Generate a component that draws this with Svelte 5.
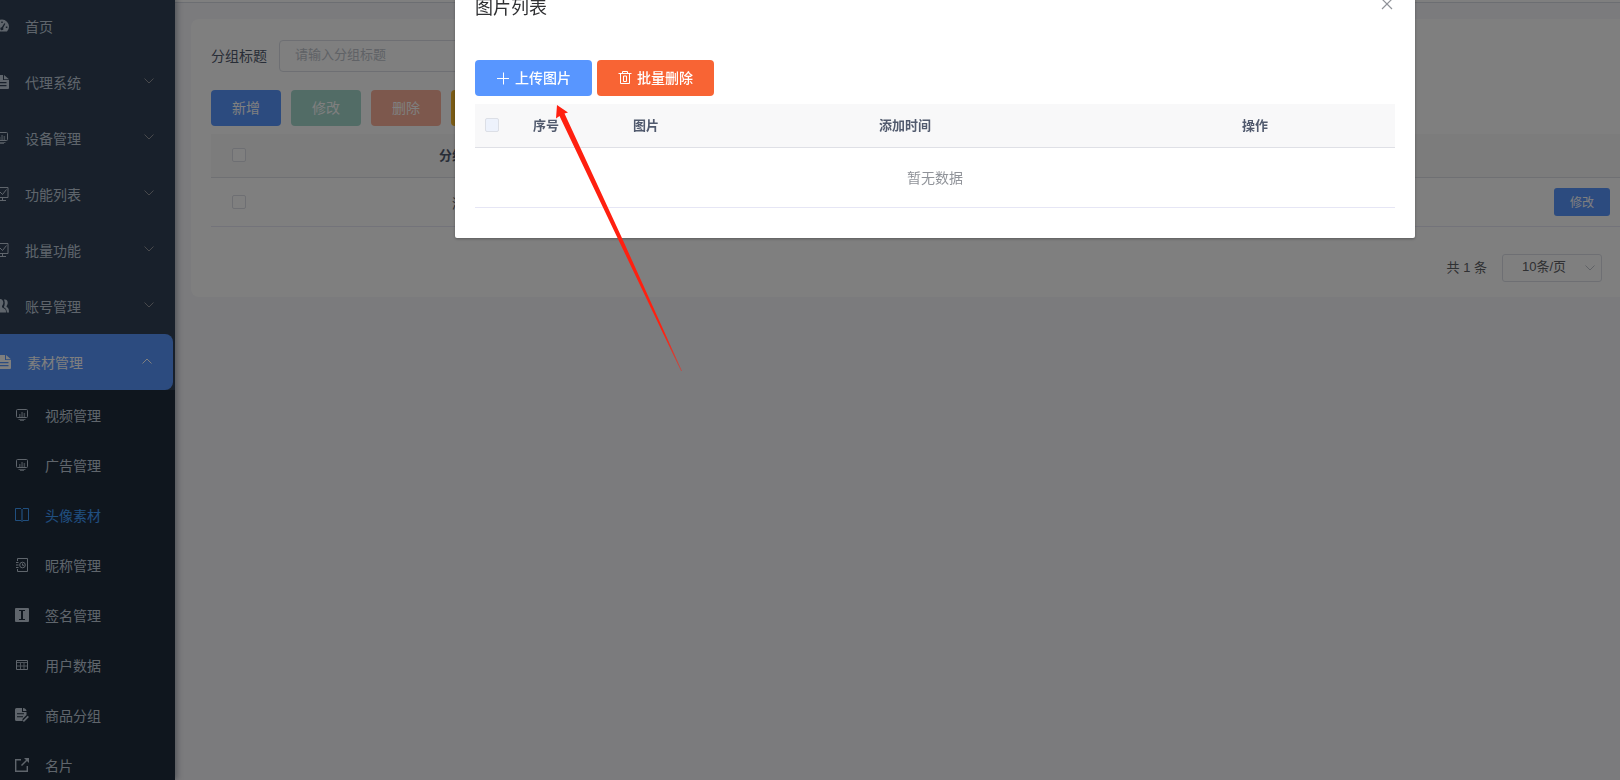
<script lang="ts">
	interface MenuItem {
		label: string;
		icon: string;
		active?: boolean;
		leaf?: boolean;
	}

	const menu: MenuItem[] = [
		{ label: '首页', icon: 'dashboard', leaf: true },
		{ label: '代理系统', icon: 'document' },
		{ label: '设备管理', icon: 'monitor' },
		{ label: '功能列表', icon: 'board' },
		{ label: '批量功能', icon: 'board' },
		{ label: '账号管理', icon: 'users' },
		{ label: '素材管理', icon: 'document', active: true }
	];

	const submenu: MenuItem[] = [
		{ label: '视频管理', icon: 'monitor' },
		{ label: '广告管理', icon: 'monitor' },
		{ label: '头像素材', icon: 'book', active: true },
		{ label: '昵称管理', icon: 'contacts' },
		{ label: '签名管理', icon: 'sign' },
		{ label: '用户数据', icon: 'table' },
		{ label: '商品分组', icon: 'edit' },
		{ label: '名片', icon: 'external' }
	];

	let title = $state('');
	let pageSize = $state('10');
	let dialogOpen = $state(true);
</script>

{#snippet icon(name: string)}
	<svg class="icon" viewBox="0 0 14 14" width="14" height="14" aria-hidden="true">
		{#if name === 'dashboard'}
			<path
				fill="currentColor"
				fill-rule="evenodd"
				d="M2 12.500A7 7 0 1 1 12 12.500zM6.300 2.500v1.600h1.400V2.500zM2.800 4.500l1.100 1.100 1-1-1.100-1.100zM1.600 7.600v1.400h1.600V7.600zM10.800 7.600v1.400h1.600V7.600zM9.300 4.200L6.800 8.200a1.500 1.500 0 1 0 1.300.700l2.300-4.200z"
			/>
		{:else if name === 'document'}
			<path
				fill="currentColor"
				fill-rule="evenodd"
				d="M1.500 0H8v5h6v8a1 1 0 0 1-1 1H1.500a1 1 0 0 1-1-1V1a1 1 0 0 1 1-1zM3 7v1.300h8.500V7zM3 10v1.300h8.500V10z"
			/>
			<path fill="currentColor" d="M9 0l5 4.200H9z" />
		{:else if name === 'monitor'}
			<rect x="1.500" y="1.500" width="11" height="8" rx="1" fill="none" stroke="currentColor" />
			<path fill="currentColor" opacity=".6" d="M4 6h1.500v3H4zM6.300 4h1.500v5H6.300zM8.600 5h1.500v4H8.600z" />
			<path stroke="currentColor" opacity=".7" d="M3.500 11.500h7M5 12.500h4" />
		{:else if name === 'board'}
			<path fill="none" stroke="currentColor" d="M0 .5h13v10H0M5 5l2.500 2.500 4-5M7.500 10.500v3M4 13.500h7" />
		{:else if name === 'users'}
			<path
				fill="currentColor"
				d="M5 0c2 0 3.300 1.600 3.300 3.600 0 1.400-.600 2.600-1.300 3.300v1.300l3.200 2c.500.500.800 1.400.800 3.300H0V9.500l3-1.300V6.900C2.300 6 1.700 5 1.700 3.600 1.700 1.600 3 0 5 0z"
			/>
			<path
				fill="currentColor"
				d="M9 .5c2.500-.5 3.800 1.200 3.700 3.300 0 1.400-.5 2.200-1.100 3.100v1.200c1.800 1 2.400 1.800 2.400 5.400h-2.200c0-2.500-.5-3.800-3-5.300C9.900 6.500 10.200 2.800 9 .5z"
			/>
		{:else if name === 'book'}
			<path fill="none" stroke="currentColor" d="M6 .5H.5v12H6M8 .5h5.500v12H8" />
			<path stroke="currentColor" stroke-width="2" opacity=".6" d="M7 1v13" />
		{:else if name === 'contacts'}
			<path fill="none" stroke="currentColor" d="M2.500 3V.5h10v13h-10V11" />
			<path stroke="currentColor" d="M1 4.500h2.500M1 7h2.500M1 9.500h2.500" />
			<circle cx="7.500" cy="7" r="2.800" fill="none" stroke="currentColor" />
			<path stroke="currentColor" d="M7.500 5.500v1.800h1.500" fill="none" />
		{:else if name === 'sign'}
			<path
				fill="currentColor"
				fill-rule="evenodd"
				d="M1 0h12a1 1 0 0 1 1 1v12a1 1 0 0 1-1 1H1a1 1 0 0 1-1-1V1a1 1 0 0 1 1-1zM4 2v1h2v8H4v1h6v-1H8V3h2V2z"
			/>
		{:else if name === 'table'}
			<path fill="none" stroke="currentColor" d="M1.500 2.500h11v9h-11z" />
			<path stroke="currentColor" opacity=".8" d="M2 4.500h10M2 8h10M5.500 5v6M9 5v6" />
		{:else if name === 'edit'}
			<path
				fill="currentColor"
				fill-rule="evenodd"
				d="M1.500 0H7v4h4.500v3L7.500 11v2H1.500A1.500 1.500 0 0 1 0 11.500v-10A1.500 1.500 0 0 1 1.500 0zM2 5.200v1h7v-1zM2 8.200v1h6v-1z"
			/>
			<path fill="currentColor" d="M8 0c2 0 3.500 1.500 3.500 3H8z" />
			<path stroke="currentColor" stroke-width="1.800" d="M8.300 13.300l5-5" />
		{:else if name === 'external'}
			<path fill="none" stroke="currentColor" stroke-width="1.400" d="M6 1.700H.7v11.600h11.600V8" />
			<path stroke="currentColor" stroke-width="1.400" d="M6.500 7.500l6-6" />
			<path fill="currentColor" d="M9 0h5v5z" />
		{:else if name === 'plus'}
			<path stroke="currentColor" d="M1 7.500h12M7.500 1.500v12" />
		{:else if name === 'trash'}
			<path
				fill="none"
				stroke="currentColor"
				d="M.5 2.500h13M4.500 2.500v-2h5v2M2.500 2.500v10h9v-10M5.500 5v5.500M8.500 5v5.500M5.500 10.500h3M5.500 5h3"
			/>
		{:else if name === 'close'}
			<path fill="none" stroke="currentColor" stroke-width="1.200" d="M2 2l10 10M12 2L2 12" />
		{:else if name === 'down'}
			<path fill="none" stroke="currentColor" d="M2.500 4.500L7 9l4.500-4.500" />
		{:else if name === 'up'}
			<path fill="none" stroke="currentColor" d="M2.500 9.500L7 5l4.500 4.500" />
		{/if}
	</svg>
{/snippet}

<div class="app">
	<nav class="sidebar">
		{#each menu as item}
			<a href="#menu" class="menu-item" class:active={item.active}>
				{@render icon(item.icon)}
				<span>{item.label}</span>
				{#if !item.leaf}
					<span class="caret">{@render icon(item.active ? 'up' : 'down')}</span>
				{/if}
			</a>
		{/each}
		<div class="submenu">
			{#each submenu as item}
				<a href="#submenu" class="sub-item" class:current={item.active}>
					{@render icon(item.icon)}
					<span>{item.label}</span>
				</a>
			{/each}
		</div>
	</nav>

	<main class="main">
		<div class="topbar"></div>
		<section class="card">
			<div class="search">
				<label for="group-title">分组标题</label>
				<input id="group-title" type="text" placeholder="请输入分组标题" bind:value={title} />
			</div>

			<div class="toolbar">
				<button type="button" class="btn primary">新增</button>
				<button type="button" class="btn success" disabled>修改</button>
				<button type="button" class="btn danger" disabled>删除</button>
				<button type="button" class="btn warning">导出</button>
			</div>

			<table class="groups">
				<colgroup>
					<col class="col-check" />
					<col class="col-title" />
					<col />
					<col class="col-action" />
				</colgroup>
				<thead>
					<tr>
						<th><input type="checkbox" aria-label="全选" /></th>
						<th>分组标题</th>
						<th></th>
						<th></th>
					</tr>
				</thead>
				<tbody>
					<tr>
						<td><input type="checkbox" aria-label="选择" /></td>
						<td>测试</td>
						<td></td>
						<td><button type="button" class="btn primary small">修改</button></td>
					</tr>
				</tbody>
			</table>

			<div class="pagination">
				<span class="total">共 1 条</span>
				<div class="page-size">
					<select bind:value={pageSize} aria-label="每页条数">
						<option value="10">10条/页</option>
						<option value="20">20条/页</option>
						<option value="50">50条/页</option>
					</select>
					{@render icon('down')}
				</div>
			</div>
		</section>
	</main>
</div>

{#if dialogOpen}
	<div class="overlay">
		<div class="dialog" role="dialog" aria-modal="true" aria-labelledby="dialog-title">
			<header>
				<h2 id="dialog-title">图片列表</h2>
				<button type="button" class="close" aria-label="关闭" onclick={() => (dialogOpen = false)}>
					{@render icon('close')}
				</button>
			</header>
			<div class="body">
				<div class="actions">
					<button type="button" class="btn primary">{@render icon('plus')}<span>上传图片</span></button>
					<button type="button" class="btn danger">{@render icon('trash')}<span>批量删除</span></button>
				</div>
				<table class="images">
					<colgroup>
						<col class="col-select" />
						<col class="col-index" />
						<col class="col-image" />
						<col />
						<col class="col-ops" />
					</colgroup>
					<thead>
						<tr>
							<th><input type="checkbox" aria-label="全选图片" disabled /></th>
							<th>序号</th>
							<th>图片</th>
							<th>添加时间</th>
							<th>操作</th>
						</tr>
					</thead>
					<tbody>
						<tr>
							<td class="empty" colspan="5">暂无数据</td>
						</tr>
					</tbody>
				</table>
			</div>
		</div>
	</div>
{/if}

<svg class="pointer" viewBox="0 0 128 268" width="128" height="268" aria-hidden="true">
	<defs>
		<linearGradient id="pointer-fade" x1="0" y1="0" x2="0" y2="1">
			<stop offset="0.85" stop-color="#ff2010" />
			<stop offset="1" stop-color="#ff2010" stop-opacity="0.5" />
		</linearGradient>
	</defs>
	<path
		fill="url(#pointer-fade)"
		d="M2 0L13 7.500L9.500 8.500L66.500 132L127 266L126 266L63 134L4.500 11L1 13.500z"
	/>
</svg>

<style>
	:global(body) {
		margin: 0;
		overflow: hidden;
		background: #f6f6fa;
	}

	.app,
	.overlay {
		font-family: 'Liberation Sans', 'Noto Sans CJK SC', sans-serif;
		font-size: 14px;
	}

	.app {
		display: flex;
		height: 100vh;
		overflow: hidden;
	}

	button,
	input,
	select {
		box-sizing: border-box;
		font-family: inherit;
	}

	.icon {
		flex: none;
		display: block;
	}

	/* sidebar */
	.sidebar {
		flex: none;
		width: 175px;
		margin-top: -2px;
		overflow: hidden;
		background: #304156;
		box-shadow: 2px 0 6px rgba(0, 21, 41, 0.35);
		z-index: 1;
	}

	.menu-item,
	.sub-item {
		display: flex;
		align-items: center;
		gap: 16px;
		color: #bfcbd9;
		text-decoration: none;
	}

	.menu-item {
		height: 56px;
		margin-left: -5px;
		padding-right: 19px;
	}

	.menu-item.active {
		margin-right: 2px;
		padding-left: 2px;
		border-radius: 0 8px 8px 0;
		background: #5896ff;
		color: #fff;
	}

	.caret {
		margin-left: auto;
		padding-bottom: 2px;
		color: #909399;
	}

	.active .caret {
		color: inherit;
	}

	.submenu {
		background: #1f2d3d;
	}

	.sub-item {
		height: 50px;
		padding-left: 15px;
	}

	.sub-item.current {
		color: #409eff;
	}

	/* content */
	.main {
		flex: 1;
		min-width: 0;
	}

	.topbar {
		height: 2px;
		border-bottom: 1px solid #d8dce5;
		background: #fff;
	}

	.card {
		margin: 16px 0 0 16px;
		padding: 21px 0 15px 20px;
		border-radius: 8px 0 0 8px;
		background: #fff;
	}

	.search {
		display: flex;
		align-items: center;
		gap: 12px;
	}

	.search label {
		padding-bottom: 3px;
		color: #515a6e;
	}

	.search input {
		width: 200px;
		height: 32px;
		padding: 0 15px 3px;
		border: 1px solid #dcdfe6;
		border-radius: 4px;
		background: #fff;
		font-size: 13px;
		outline: none;
	}

	.search input::placeholder {
		color: #c0c4cc;
	}

	.toolbar {
		display: flex;
		gap: 10px;
		margin: 18px 0 8px;
	}

	.btn {
		display: inline-flex;
		align-items: center;
		gap: 5px;
		height: 36px;
		padding: 0 21px 2px;
		border: 0;
		border-radius: 4px;
		color: #fff;
		font-size: 14px;
		white-space: nowrap;
		cursor: pointer;
	}

	.btn:disabled {
		cursor: not-allowed;
	}

	.primary {
		background: #5896ff;
	}

	.success {
		background: #a4d8cd;
	}

	.danger {
		background: #f86434;
	}

	.danger:disabled {
		background: #fbb19a;
	}

	.warning {
		background: #f7b92b;
	}

	.small {
		height: 28px;
		padding: 0 16px 2px;
		border-radius: 3px;
		font-size: 12px;
		vertical-align: middle;
	}

	table {
		width: 100%;
		border-collapse: separate;
		border-spacing: 0;
		table-layout: fixed;
		font-size: 13px;
	}

	th {
		box-sizing: border-box;
		height: 44px;
		padding: 0 0 2px;
		border-bottom: 1px solid #dfe0e6;
		background: #f8f8f9;
		color: #515a6e;
	}

	td {
		height: 48px;
		padding: 0;
		border-bottom: 1px solid #e6e6f5;
		color: #606266;
	}

	input[type='checkbox'] {
		display: block;
		width: 14px;
		height: 14px;
		margin: 0 auto;
		border: 1px solid #dcdfe6;
		border-radius: 2px;
		background: #fff;
		appearance: none;
	}

	input[type='checkbox']:disabled {
		margin: 1px 0 0;
		background: #edf2fc;
	}

	.groups {
		text-align: center;
	}

	.col-check {
		width: 56px;
	}

	.col-title {
		width: 396px;
	}

	.col-action {
		width: 76px;
	}

	.pagination {
		display: flex;
		align-items: center;
		justify-content: flex-end;
		gap: 15px;
		margin-top: 27px;
		padding-right: 18px;
		color: #606266;
		font-size: 13px;
	}

	.total {
		padding-bottom: 3px;
	}

	.page-size {
		position: relative;
		color: #c0c4cc;
	}

	.page-size select {
		display: block;
		width: 100px;
		height: 28px;
		padding: 0 35px 3px 19px;
		border: 1px solid #dcdfe6;
		border-radius: 3px;
		background: #fff;
		color: #606266;
		font-size: 13px;
		appearance: none;
	}

	.page-size .icon {
		position: absolute;
		top: 7px;
		right: 5px;
		pointer-events: none;
	}

	/* dialog */
	.overlay {
		position: fixed;
		inset: 0;
		z-index: 10;
		display: flex;
		align-items: flex-start;
		padding: 0 205px 0 455px;
		background: rgba(0, 0, 0, 0.5);
	}

	.dialog {
		flex: 1;
		margin-top: -24px;
		border-radius: 2px;
		background: #fff;
		box-shadow: 0 1px 3px rgba(0, 0, 0, 0.3);
	}

	.dialog header {
		display: flex;
		align-items: center;
		justify-content: space-between;
		padding: 20px 20px 10px;
	}

	.dialog h2 {
		margin: 0;
		color: #303133;
		font-size: 18px;
		font-weight: 400;
		line-height: 24px;
	}

	.close {
		padding: 0 1px 8px;
		border: 0;
		background: none;
		color: #909399;
		cursor: pointer;
	}

	.dialog .body {
		padding: 30px 20px;
	}

	.actions {
		display: flex;
		gap: 5px;
		margin-bottom: 8px;
	}

	.actions .btn {
		padding-bottom: 1px;
		font-weight: 500;
	}

	.actions span {
		padding-bottom: 2px;
	}

	.images th {
		padding: 0 10px 2px;
		text-align: left;
	}

	.images .empty {
		height: 57px;
		padding-bottom: 2px;
		color: #909399;
		font-size: 14px;
		text-align: center;
	}

	.col-select {
		width: 48px;
	}

	.col-index {
		width: 100px;
	}

	.col-image {
		width: 246px;
	}

	.col-ops {
		width: 163px;
	}

	/* hint arrow over the upload button */
	.pointer {
		position: fixed;
		top: 105px;
		left: 555px;
		z-index: 20;
		pointer-events: none;
	}
</style>
